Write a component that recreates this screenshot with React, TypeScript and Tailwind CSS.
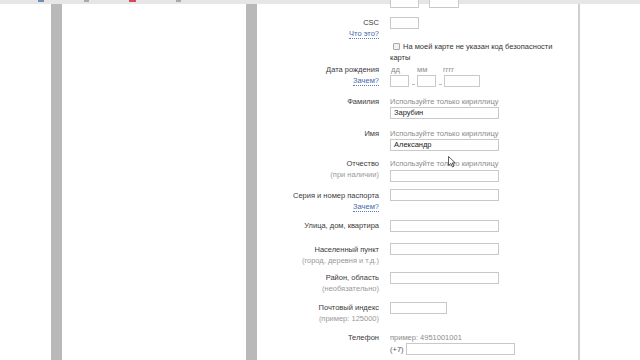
import React from 'react';

const font = { fontFamily: '"Liberation Sans", Arial, sans-serif' };

function Box({ w, value }: { w: string; value?: string }) {
  return (
    <div className={`${w} h-[12px] border border-[#c9c9c9] bg-white pl-[3px] text-[7.5px] leading-[10px] text-[#222]`}>
      {value}
    </div>
  );
}

function Link({ children }: { children: React.ReactNode }) {
  return <span className="border-b border-dotted border-[#5b7db5] leading-[10px] text-[#3f67a8]">{children}</span>;
}

function Row({
  mt,
  label,
  sub,
  children,
}: {
  mt: string;
  label: string;
  sub?: React.ReactNode;
  children: React.ReactNode;
}) {
  return (
    <div className={`flex ${mt}`}>
      <div className="ml-[4px] mr-[11px] w-[118px] shrink-0 text-right">
        <div className="text-[#3a3a3a]">{label}</div>
        {sub && <div className="text-[#999]">{sub}</div>}
      </div>
      <div className="flex flex-col">{children}</div>
    </div>
  );
}

const Hint = ({ children }: { children: React.ReactNode }) => <div className="text-[#8c8c8c]">{children}</div>;

const Dash = () => (
  <span className="flex w-[8px] items-end justify-center pb-[2px]">
    <span className="h-px w-[3px] bg-[#bbb]" />
  </span>
);

export default function App() {
  return (
    <div className="relative flex h-[360px] w-[640px] flex-col overflow-hidden bg-white" style={font}>
      {/* browser toolbar remnant */}
      <div className="flex h-[4px] shrink-0 items-start gap-[40px] bg-[#e7e5e5] pl-[38px]">
        <span className="h-[2px] w-[6px] bg-[#6a8fb5]" />
        <span className="h-[2px] w-[5px] bg-[#a9a9a9]" />
        <span className="h-[2px] w-[7px] bg-[#d8475a]" />
        <span className="h-[2px] w-[5px] bg-[#a9a9a9]" />
      </div>
      <div className="flex min-h-0 flex-1">
        <div className="w-[51px] shrink-0" />
        <div className="w-[11px] shrink-0 bg-[#b9b9b9]" />
        <div className="w-[184px] shrink-0" />
        <div className="w-[11px] shrink-0 bg-[#b9b9b9]" />
        <div className="w-[321px] shrink-0 text-[7.5px] leading-[11px]">
          <div className="ml-[133px] mt-[-8px] flex">
            <Box w="w-[29px]" />
            <span className="w-[10px]" />
            <Box w="w-[30px]" />
          </div>
          <Row mt="mt-[9px]" label="CSC" sub={<Link>Что это?</Link>}>
            <Box w="w-[29px]" />
          </Row>
          <div className="ml-[133px] mt-[2px] w-[176px] text-[#333]">
            <span className="mr-[3px] ml-[3px] inline-block h-[7px] w-[7px] rounded-[1px] border border-[#a8a8a8] bg-[#f1f1f1] align-[-1px]" />
            На моей карте не указан код безопасности карты
          </div>
          <Row mt="mt-[1px]" label="Дата рождения" sub={<Link>Зачем?</Link>}>
            <div className="flex text-[#8c8c8c]">
              <span className="ml-[1px] w-[26px]">дд</span>
              <span className="w-[26px]">мм</span>
              <span>гггг</span>
            </div>
            <div className="flex">
              <Box w="w-[19px]" />
              <Dash />
              <Box w="w-[19px]" />
              <Dash />
              <Box w="w-[36px]" />
            </div>
          </Row>
          <Row mt="mt-[9px]" label="Фамилия">
            <Hint>Используйте только кириллицу</Hint>
            <Box w="w-[109px]" value="Зарубин" />
          </Row>
          <Row mt="mt-[9px]" label="Имя">
            <Hint>Используйте только кириллицу</Hint>
            <Box w="w-[109px]" value="Александр" />
          </Row>
          <Row mt="mt-[7px]" label="Отчество" sub="(при наличии)">
            <Hint>Используйте только кириллицу</Hint>
            <div className="mt-[1px]">
              <Box w="w-[109px]" />
            </div>
          </Row>
          <Row mt="mt-[8px]" label="Серия и номер паспорта" sub={<Link>Зачем?</Link>}>
            <div className="-mt-px">
              <Box w="w-[109px]" />
            </div>
          </Row>
          <Row mt="mt-[8px]" label="Улица, дом, квартира">
            <Box w="w-[109px]" />
          </Row>
          <Row mt="mt-[12px]" label="Населенный пункт" sub="(город, деревня и т.д.)">
            <div className="-mt-px">
              <Box w="w-[109px]" />
            </div>
          </Row>
          <Row mt="mt-[6px]" label="Район, область" sub="(необязательно)">
            <Box w="w-[109px]" />
          </Row>
          <Row mt="mt-[8px]" label="Почтовый индекс" sub="(пример: 125000)">
            <Box w="w-[57px]" />
          </Row>
          <Row mt="mt-[8px]" label="Телефон">
            <Hint>пример: 4951001001</Hint>
            <div className="flex items-center gap-[2px] text-[#555]">
              <span>(+7)</span>
              <Box w="w-[109px]" />
            </div>
          </Row>
        </div>
        <div className="w-[2px] shrink-0 bg-[#cfcfcf]" />
      </div>
      {/* mouse pointer */}
      <svg className="absolute left-[448px] top-[156px]" width="8" height="12" viewBox="0 0 8 12">
        <path d="M0.5 0.5 L0.5 9.5 L2.8 7.4 L4.4 11 L5.8 10.4 L4.3 6.9 L7.3 6.9 Z" fill="#fff" stroke="#333" strokeWidth="0.8" />
      </svg>
    </div>
  );
}
